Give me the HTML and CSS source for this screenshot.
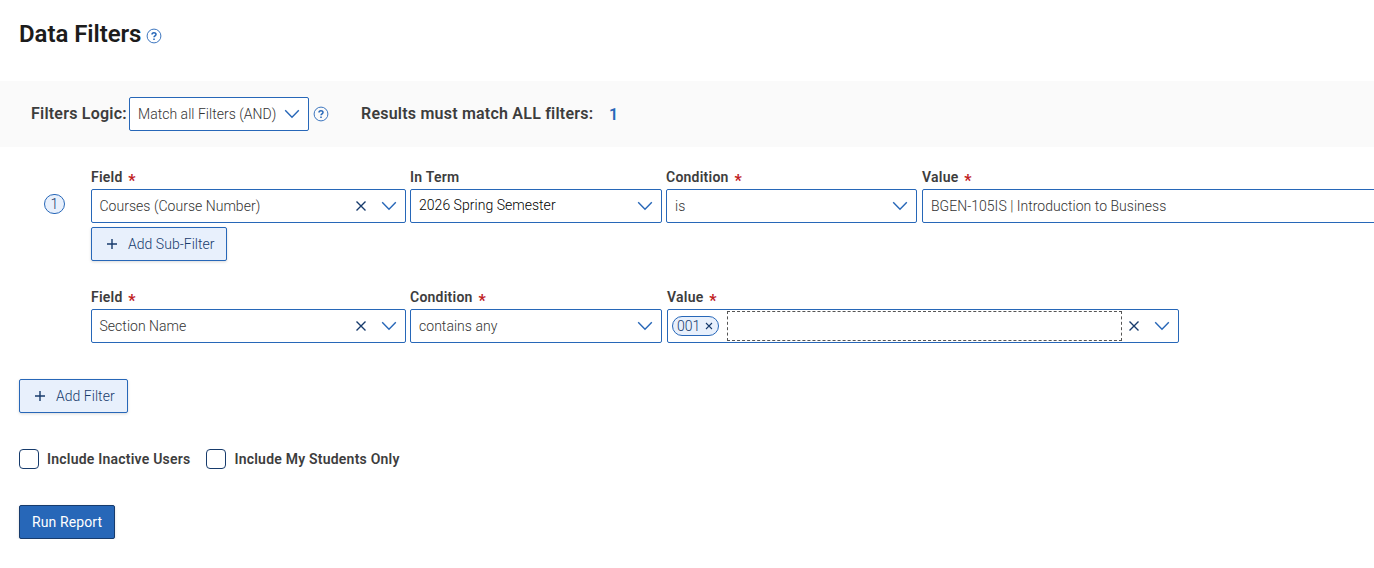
FILE: index.html
```html
<!DOCTYPE html>
<html lang="en">
<head>
  <meta charset="UTF-8">
  <title>Data Filters</title>
  <link rel="stylesheet" href="styles.css">
</head>
<body>
  <!-- Shared icons -->
  <svg class="icon-defs" width="0" height="0">
    <symbol id="chevron" viewBox="0 0 16 10"><path d="M1.2 1.2 L8 8.2 L14.8 1.2"/></symbol>
    <symbol id="clear" viewBox="0 0 12 12"><path d="M1.5 1.5 L10.5 10.5 M10.5 1.5 L1.5 10.5"/></symbol>
    <symbol id="plus" viewBox="0 0 12 12"><path d="M6 1 V11 M1 6 H11"/></symbol>
    <symbol id="help" viewBox="0 0 16 16">
      <circle cx="8" cy="8" r="6.9"/>
      <path class="help-mark" d="M6 6.5 C6 4.1 10 4.1 10 6.4 C10 7.8 8 7.8 8 9.3 M8 10.4 V12"/>
    </symbol>
  </svg>

  <header class="page-header">
    <h1>Data Filters</h1>
    <svg class="help-icon"><use href="#help"/></svg>
  </header>

  <div class="logic-bar">
    <span class="logic-label">Filters Logic:</span>
    <div class="select logic-select">
      <span class="select-text">Match all Filters (AND)</span>
      <svg class="chevron"><use href="#chevron"/></svg>
    </div>
    <svg class="help-icon"><use href="#help"/></svg>
    <span class="results-label">Results must match ALL filters:</span>
    <span class="results-number">1</span>
  </div>

  <main class="filters">
    <div class="filter-group">
      <span class="filter-number">1</span>
      <div class="filter-rows">
        <div class="filter-row">
          <div class="field field-name">
            <label>Field <span class="required">*</span></label>
            <div class="select">
              <span class="select-text">Courses (Course Number)</span>
              <svg class="clear"><use href="#clear"/></svg>
              <svg class="chevron"><use href="#chevron"/></svg>
            </div>
          </div>
          <div class="field field-term">
            <label>In Term</label>
            <div class="select native">
              <span class="select-text">2026 Spring Semester</span>
              <svg class="chevron"><use href="#chevron"/></svg>
            </div>
          </div>
          <div class="field field-condition">
            <label>Condition <span class="required">*</span></label>
            <div class="select">
              <span class="select-text">is</span>
              <svg class="chevron"><use href="#chevron"/></svg>
            </div>
          </div>
          <div class="field field-value">
            <label>Value <span class="required">*</span></label>
            <div class="select">
              <span class="select-text">BGEN-105IS | Introduction to Business</span>
            </div>
          </div>
        </div>
        <button class="btn btn-sub" type="button">
          <svg class="plus"><use href="#plus"/></svg>
          <span>Add Sub-Filter</span>
        </button>

        <div class="filter-row sub-row">
          <div class="field field-name">
            <label>Field <span class="required">*</span></label>
            <div class="select">
              <span class="select-text">Section Name</span>
              <svg class="clear"><use href="#clear"/></svg>
              <svg class="chevron"><use href="#chevron"/></svg>
            </div>
          </div>
          <div class="field field-term">
            <label>Condition <span class="required">*</span></label>
            <div class="select">
              <span class="select-text">contains any</span>
              <svg class="chevron"><use href="#chevron"/></svg>
            </div>
          </div>
          <div class="field field-value">
            <label>Value <span class="required">*</span></label>
            <div class="select tags">
              <span class="tag">001 <svg class="tag-clear"><use href="#clear"/></svg></span>
              <span class="tag-input"></span>
              <svg class="clear"><use href="#clear"/></svg>
              <svg class="chevron"><use href="#chevron"/></svg>
            </div>
          </div>
        </div>
      </div>
    </div>

    <button class="btn btn-add" type="button">
      <svg class="plus"><use href="#plus"/></svg>
      <span>Add Filter</span>
    </button>

    <div class="options">
      <label class="option"><input type="checkbox"><span>Include Inactive Users</span></label>
      <label class="option"><input type="checkbox"><span>Include My Students Only</span></label>
    </div>

    <button class="btn btn-run" type="button">Run Report</button>
  </main>
</body>
</html>
```
FILE: styles.css
```css
* {
  box-sizing: border-box;
}

body {
  margin: 0;
  background: #fff;
  color: #333;
  font-family: Roboto, sans-serif;
  font-size: 14px;
  font-weight: 300;
  letter-spacing: 0.03px;
  overflow: hidden;
}

/* Icons */
svg {
  flex: none;
  fill: none;
  stroke-width: 1.4;
}
.icon-defs {
  display: block;
}
.help-icon {
  width: 16px;
  height: 16px;
  stroke: #2767b8;
  stroke-width: 0.9;
}
.help-mark {
  stroke-width: 1.5;
}
.chevron {
  width: 16px;
  height: 10px;
  stroke: #2767b8;
}
.clear {
  width: 12px;
  height: 12px;
  margin-right: 14px;
  stroke: #173b6c;
}
.plus {
  width: 12px;
  height: 12px;
  stroke: #173b6c;
}

/* Page title */
.page-header {
  display: flex;
  align-items: center;
  gap: 5px;
  height: 81px;
  padding: 0 19px 13px;
}
.page-header h1 {
  margin: 0;
  color: #1c1c1c;
  font-size: 24px;
  font-weight: 600;
  letter-spacing: -0.06px;
}
.page-header .help-icon {
  margin-top: 4px;
}

/* Logic bar */
.logic-bar {
  display: flex;
  align-items: center;
  height: 66px;
  padding-left: 31px;
  background: #fafafa;
  font-size: 16px;
}
.logic-label,
.results-label,
.results-number {
  color: #3d3d3d;
  font-weight: 600;
  letter-spacing: 0.22px;
  white-space: nowrap;
}
.logic-label {
  width: 98px;
  padding-bottom: 2px;
}
.logic-select {
  width: 180px;
  margin-right: 4px;
}
.results-label {
  width: 248px;
  margin-left: 32px;
  padding-bottom: 2px;
}
.results-number {
  color: #2767b8;
}

/* Select boxes */
.select {
  display: flex;
  align-items: center;
  height: 34px;
  padding: 0 8px;
  background: #fff;
  border: 1px solid #2767b8;
  border-radius: 2px;
  font-size: 14px;
}
.select-text {
  flex: 1;
  white-space: nowrap;
}
.native {
  color: #000;
}
.native .select-text {
  padding-bottom: 2px;
}

/* Filter rows */
.filters {
  padding: 21px 0 0 19px;
}
.filter-group {
  display: flex;
}
.filter-number {
  flex: none;
  width: 21px;
  height: 20px;
  margin: 26px 26px 0 25px;
  background: #e8f0fc;
  border: 1px solid #2767b8;
  border-radius: 10px;
  color: #173b6c;
  line-height: 19px;
  text-align: center;
}
.filter-row {
  display: flex;
  gap: 4px;
}
.sub-row {
  margin-top: 27px;
}
.field {
  flex: none;
}
.field label {
  display: block;
  height: 21px;
  color: #3d3d3d;
  font-weight: 600;
  letter-spacing: 0.24px;
  line-height: 18px;
}
.required {
  display: inline-block;
  margin-left: 2px;
  color: #c0211f;
  font-size: 16px;
  font-weight: 700;
  line-height: 14px;
  vertical-align: -4px;
}
.field-name {
  width: 315px;
}
.field-name .select {
  padding-left: 7.5px;
}
.field-term {
  width: 252px;
}
.field-condition {
  width: 251px;
}
.field-value {
  width: 512px;
  margin-left: 1px;
}

/* Value tags */
.tags {
  padding-left: 4px;
}
.tag {
  display: flex;
  align-items: center;
  gap: 5px;
  width: 47px;
  height: 20px;
  padding-left: 4px;
  background: #e8f0fc;
  border: 1px solid #2767b8;
  border-radius: 10px;
  color: #173b6c;
}
.tag-clear {
  width: 8px;
  height: 8px;
  stroke: #173b6c;
  stroke-width: 1.6;
}
.tag-input {
  flex: 1;
  height: 30px;
  margin: 0 6px 0 8px;
  border: 1px dashed #555;
}

/* Buttons */
.btn {
  display: flex;
  align-items: center;
  height: 34px;
  padding: 0 14px;
  background: #e8f0fc;
  border: 1px solid #2767b8;
  border-radius: 2px;
  box-shadow: 0 1px 3px rgba(0, 0, 0, 0.15);
  color: #173b6c;
  font: inherit;
  letter-spacing: inherit;
  white-space: nowrap;
}
.btn span {
  margin-left: 10px;
}
.btn-sub {
  width: 136px;
  margin-top: 4px;
}
.btn-add {
  width: 109px;
  margin-top: 36px;
}
.btn-run {
  width: 96px;
  padding: 0 12px;
  background: #2767b8;
  border-color: #173b6c;
  color: #fff;
  font-weight: 400;
  letter-spacing: 0.1px;
}

/* Checkbox options */
.options {
  display: flex;
  gap: 16px;
  margin: 36px 0;
}
.option {
  display: flex;
  align-items: center;
  gap: 8px;
  color: #3d3d3d;
  font-weight: 600;
  letter-spacing: 0.22px;
}
.option input {
  appearance: none;
  width: 20px;
  height: 20px;
  margin: 0;
  background: #fff;
  border: 1px solid #173b6c;
  border-radius: 4px;
}
```
